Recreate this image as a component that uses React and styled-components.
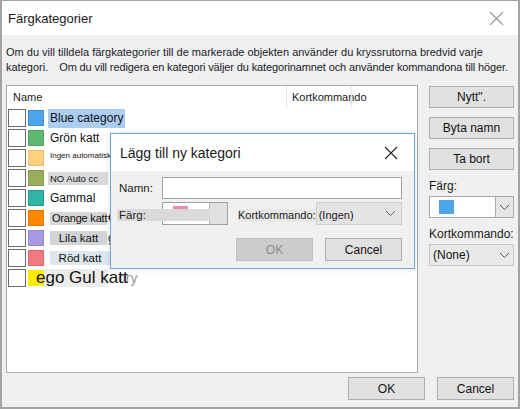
import React from "react";
import styled, { createGlobalStyle, css } from "styled-components";

const GlobalStyle = createGlobalStyle`
  html, body { margin: 0; padding: 0; background: #ffffff; }
  body { font-family: "Liberation Sans", Arial, sans-serif; color: #1a1a1a; }
  * { box-sizing: border-box; }
`;

const rows = [
  { color: "#4fa5ea", border: "#3d8fd2", label: "Blue category", variant: "selected" },
  { color: "#5fb872", border: "#4ea560", label: "Grön katt", extra: "gory" },
  { color: "#ffd17f", border: "#f0bf6a", label: "Ingen automatisk", variant: "tiny" },
  { color: "#9bae5b", border: "#889c4a", label: "NO Auto cc", variant: "small" },
  { color: "#30b5a6", border: "#229f91", label: "Gammal" },
  { color: "#ff8600", border: "#ee7600", label: "Orange katt", extra: "€", variant: "gray" },
  { color: "#a999e1", border: "#9585d2", label: "Lila katt", extra: "g", variant: "grayCenter" },
  { color: "#f17b85", border: "#e06672", label: "Röd katt", extra: "r", variant: "blue" },
  { color: "#ffed00", border: "#ffed00", label: "ego Gul katt", extra: "ory", variant: "large" },
];

const Chevron = ({ color = "#555" }) => (
  <svg width="11" height="7" viewBox="0 0 11 7">
    <path d="M1 1 L5.5 5.5 L10 1" fill="none" stroke={color} strokeWidth="1" />
  </svg>
);

const CloseIcon = ({ size = 14, color = "#333" }) => (
  <svg width={size} height={size} viewBox="0 0 14 14">
    <path d="M1 1 L13 13 M13 1 L1 13" stroke={color} strokeWidth="1.1" fill="none" />
  </svg>
);

const App = () => {
  return (
    <>
      <GlobalStyle />
      <Window>
        <TitleBar>
          <Title>Färgkategorier</Title>
          <CloseIcon size={15} color="#8a8a8a" />
        </TitleBar>
        <Body>
          <Description>
            Om du vill tilldela färgkategorier till de markerade objekten använder du kryssrutorna bredvid varje
            <br />
            kategori.<Gap />
            <Tight>Om du vill redigera en kategori väljer du kategorinamnet och använder kommandona till höger.</Tight>
          </Description>
          <Main>
            <ListBox>
              <ListHeader>
                <HeaderCell $width={273}>Name</HeaderCell>
                <HeaderCell $width={65} $divider>
                  Kortkommando
                </HeaderCell>
                <HeaderCell $width={60} $divider />
              </ListHeader>
              {rows.map((r) => (
                <Row key={r.label}>
                  <Check />
                  <Swatch $color={r.color} $border={r.border} />
                  <Label $variant={r.variant}>{r.label}</Label>
                  {r.extra && <Extra $variant={r.variant}>{r.extra}</Extra>}
                </Row>
              ))}
            </ListBox>
            <Side>
              <SideButton>Nytt".</SideButton>
              <SideButton>Byta namn</SideButton>
              <SideButton>Ta bort</SideButton>
              <SideLabel>Färg:</SideLabel>
              <ColorSelect>
                <ColorSelectValue>
                  <BlueSwatch />
                </ColorSelectValue>
                <DropPart>
                  <Chevron />
                </DropPart>
              </ColorSelect>
              <SideLabel>Kortkommando:</SideLabel>
              <NoneSelect>
                <span>(None)</span>
                <Chevron />
              </NoneSelect>
            </Side>
          </Main>
          <Footer>
            <DialogButton>OK</DialogButton>
            <DialogButton>Cancel</DialogButton>
          </Footer>
        </Body>

        <Dialog>
          <DialogTitleBar>
            <DialogTitle>Lägg till ny kategori</DialogTitle>
            <CloseIcon size={14} color="#222" />
          </DialogTitleBar>
          <DialogBody>
            <FieldRow>
              <FieldLabel>Namn:</FieldLabel>
              <TextInput />
            </FieldRow>
            <FieldRow>
              <BandLabel $width={93}>Färg:</BandLabel>
              <ColorButton>
                <ColorButtonFace>
                  <PinkSwatch />
                </ColorButtonFace>
                <ColorButtonSide />
              </ColorButton>
              <ShortcutLabel>Kortkommando: (Ingen)</ShortcutLabel>
              <ShortcutSelect>
                <Chevron color="#666" />
              </ShortcutSelect>
            </FieldRow>
            <DialogButtons>
              <DialogButton $disabled>OK</DialogButton>
              <DialogButton>Cancel</DialogButton>
            </DialogButtons>
          </DialogBody>
        </Dialog>
      </Window>
    </>
  );
};

const Window = styled.div`
  position: relative;
  width: 520px;
  height: 409px;
  border: 2px solid #a3a3a3;
  border-top-width: 1px;
  background: #f0f0f0;
  display: flex;
  flex-direction: column;
  overflow: hidden;
`;

const TitleBar = styled.div`
  height: 34px;
  background: #ffffff;
  display: flex;
  align-items: center;
  justify-content: space-between;
  padding: 0 14px 0 6px;
  flex-shrink: 0;
`;

const Title = styled.div`
  font-size: 13px;
  color: #1a1a1a;
`;

const Body = styled.div`
  flex: 1;
  display: flex;
  flex-direction: column;
  padding: 10px 4px 0 4px;
`;

const Description = styled.div`
  font-size: 11px;
  line-height: 15px;
  color: #1a1a2a;
  white-space: nowrap;
`;

const Gap = styled.span`
  display: inline-block;
  width: 11px;
`;

const Tight = styled.span`
  letter-spacing: -0.12px;
`;

const Main = styled.div`
  display: flex;
  gap: 11px;
  margin-top: 10px;
`;

const ListBox = styled.div`
  width: 412px;
  height: 288px;
  flex-shrink: 0;
  background: #ffffff;
  border: 1px solid #a9a9a9;
  display: flex;
  flex-direction: column;
`;

const ListHeader = styled.div`
  height: 22px;
  display: flex;
  align-items: center;
  padding-left: 6px;
`;

const HeaderCell = styled.div`
  width: ${(p) => p.$width}px;
  height: 22px;
  display: flex;
  align-items: center;
  font-size: 11px;
  color: #1a1a1a;
  padding-left: ${(p) => (p.$divider ? "5px" : "0")};
  border-left: ${(p) => (p.$divider ? "1px solid #e5e5e5" : "none")};
  flex-shrink: 0;
`;

const Row = styled.div`
  height: 20px;
  display: flex;
  align-items: center;
  padding-left: 1px;
`;

const Check = styled.div`
  width: 18px;
  height: 18px;
  border: 1px solid #6a6a6a;
  background: #ffffff;
  flex-shrink: 0;
`;

const Swatch = styled.div`
  width: 16px;
  height: 16px;
  margin-left: 2px;
  background: ${(p) => p.$color};
  border: 1px solid ${(p) => p.$border};
  flex-shrink: 0;
`;

const labelVariants = {
  selected: css`
    background: #aacdf1;
    height: 19px;
    padding: 0 2px;
    margin-left: 4px;
    font-size: 12px;
  `,
  tiny: css`
    font-size: 8px;
    align-self: flex-start;
    padding-top: 3px;
  `,
  small: css`
    background: #d9d9d9;
    font-size: 9.5px;
    height: 13px;
    width: 60px;
    margin-left: 4px;
    padding-left: 2px;
  `,
  gray: css`
    background: #d6d6d6;
    height: 13px;
    width: 57px;
    padding-left: 2px;
    font-size: 11px;
    letter-spacing: -0.2px;
    overflow: visible;
  `,
  grayCenter: css`
    background: #d2d5d8;
    height: 14px;
    width: 57px;
    justify-content: center;
    font-size: 11.5px;
  `,
  blue: css`
    background: #dce7f0;
    height: 14px;
    width: 60px;
    justify-content: center;
    font-size: 11.5px;
  `,
  large: css`
    background: linear-gradient(to right, transparent 8px, #ececec 8px);
    font-size: 17px;
    margin-left: -8px;
    height: 18px;
    width: 72px;
    overflow: visible;
    position: relative;
  `,
};

const Label = styled.div`
  display: flex;
  align-items: center;
  margin-left: 6px;
  font-size: 12px;
  color: #111;
  white-space: nowrap;
  flex-shrink: 0;
  ${(p) => labelVariants[p.$variant]}
`;

const Extra = styled.div`
  font-size: ${(p) => (p.$variant === "large" ? "14px" : "12px")};
  color: ${(p) => (p.$variant === "large" ? "#9a9a9a" : "#111")};
  margin-left: ${(p) => (p.$variant === "large" ? "10px" : p.$variant ? "1px" : "12px")};
  white-space: nowrap;
`;

const Side = styled.div`
  width: 85px;
  display: flex;
  flex-direction: column;
  padding-top: 1px;
`;

const buttonBase = css`
  height: 22px;
  background: #e1e1e1;
  border: 1px solid #adadad;
  font-family: "Liberation Sans", Arial, sans-serif;
  font-size: 12px;
  color: #111;
  display: flex;
  align-items: center;
  justify-content: center;
  flex-shrink: 0;
`;

const SideButton = styled.div`
  ${buttonBase}
  margin-bottom: 9px;
`;

const SideLabel = styled.div`
  font-size: 12px;
  color: #1a1a1a;
  margin: 0 0 2px 0;
  line-height: 15px;
`;

const ColorSelect = styled.div`
  height: 22px;
  display: flex;
  border: 1px solid #a9a9a9;
  background: #ffffff;
  margin-bottom: 9px;
`;

const ColorSelectValue = styled.div`
  flex: 1;
  display: flex;
  align-items: center;
  padding-left: 9px;
`;

const BlueSwatch = styled.div`
  width: 15px;
  height: 14px;
  background: #4fa5ea;
`;

const DropPart = styled.div`
  width: 18px;
  display: flex;
  align-items: center;
  justify-content: center;
  background: #e6e6e6;
  border-left: 1px solid #a9a9a9;
`;

const NoneSelect = styled.div`
  height: 22px;
  display: flex;
  align-items: center;
  justify-content: space-between;
  padding: 0 3px 0 3px;
  background: #e9e9e9;
  border: 1px solid #c9c9c9;
  font-size: 12px;
  color: #111;
`;

const Footer = styled.div`
  display: flex;
  justify-content: flex-end;
  gap: 12px;
  margin-top: 4px;
`;

const DialogButton = styled.div`
  ${buttonBase}
  width: 77px;
  height: 23px;
  ${(p) =>
    p.$disabled &&
    css`
      background: #cccccc;
      border-color: #bfbfbf;
      color: #8c8c8c;
    `}
`;

const Dialog = styled.div`
  position: absolute;
  left: 108px;
  top: 132px;
  width: 305px;
  height: 136px;
  border: 1px solid #6ea5da;
  background: #f0f0f0;
  display: flex;
  flex-direction: column;
  box-shadow: 0 0 6px rgba(0, 0, 0, 0.12);
`;

const DialogTitleBar = styled.div`
  height: 37px;
  background: #ffffff;
  display: flex;
  align-items: center;
  justify-content: space-between;
  padding: 0 16px 0 9px;
  flex-shrink: 0;
`;

const DialogTitle = styled.div`
  font-size: 14px;
  color: #1a1a1a;
`;

const DialogBody = styled.div`
  display: flex;
  flex-direction: column;
  padding: 6px 12px 0 6px;
  gap: 3px;
`;

const FieldRow = styled.div`
  display: flex;
  align-items: center;
`;

const FieldLabel = styled.div`
  width: 45px;
  flex-shrink: 0;
  font-size: 11.5px;
  color: #1a1a1a;
  padding-left: 2px;
`;

const TextInput = styled.div`
  flex: 1;
  height: 22px;
  background: #ffffff;
  border: 1px solid #a0a0a0;
`;

const BandLabel = styled.div`
  position: relative;
  z-index: 1;
  width: ${(p) => p.$width}px;
  flex-shrink: 0;
  height: 12px;
  margin-top: 3px;
  background: #dadada;
  font-size: 11.5px;
  line-height: 12px;
  padding-left: 2px;
  color: #1a1a1a;
`;

const ColorButton = styled.div`
  width: 66px;
  height: 23px;
  flex-shrink: 0;
  margin-left: -48px;
  display: flex;
  border: 1px solid #a0a0a0;
  background: #ffffff;
`;

const ColorButtonFace = styled.div`
  flex: 1;
  padding: 3px 0 0 10px;
`;

const PinkSwatch = styled.div`
  width: 15px;
  height: 6px;
  background: #e28bb5;
`;

const ColorButtonSide = styled.div`
  width: 18px;
  background: #e1e1e1;
  border-left: 1px solid #b5b5b5;
`;

const ShortcutLabel = styled.div`
  position: relative;
  z-index: 1;
  width: 78px;
  flex-shrink: 0;
  margin-left: 10px;
  margin-top: 3px;
  height: 13px;
  line-height: 13px;
  font-size: 11px;
  color: #1a1a1a;
  white-space: nowrap;
  background: #e8e8e8;
`;

const ShortcutSelect = styled.div`
  width: 86px;
  height: 23px;
  flex-shrink: 0;
  background: #e4e4e4;
  border: 1px solid #cfcfcf;
  display: flex;
  align-items: center;
  justify-content: flex-end;
  padding-right: 5px;
`;

const DialogButtons = styled.div`
  display: flex;
  justify-content: flex-end;
  gap: 12px;
  margin-top: 10px;
`;

export default App;
